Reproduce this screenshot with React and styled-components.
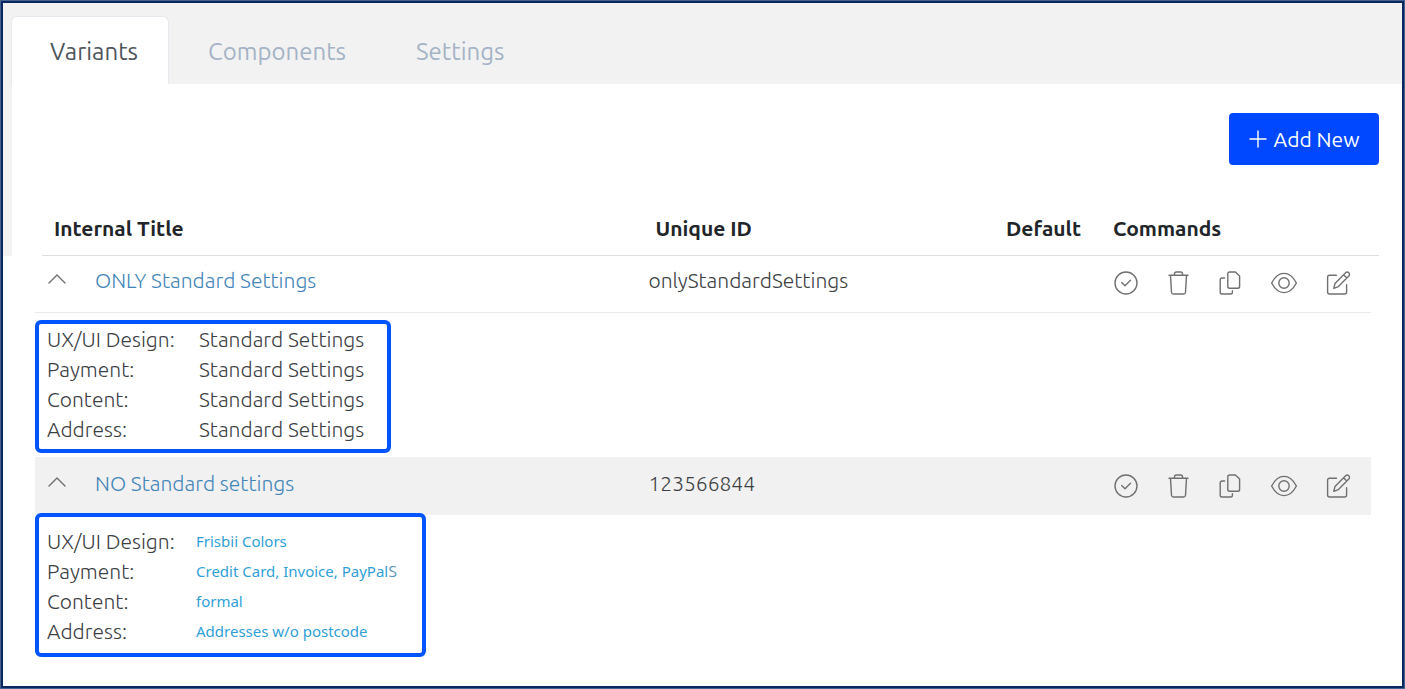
import React, { useState } from "react";
import styled, { createGlobalStyle } from "styled-components";

const GlobalStyle = createGlobalStyle`
  *, *::before, *::after {
    box-sizing: border-box;
  }

  body {
    margin: 0;
    background: #fff;
    color: #3c4043;
    font-family: Ubuntu, "Noto Sans", "Open Sans", sans-serif;
    font-size: 21px;
    font-weight: 300;
    line-height: 30px;
  }

  button {
    font: inherit;
    cursor: pointer;
  }
`

const Page = styled.main`
  min-height: 100vh;
  border: 3px solid #0a2860;
  outline: 1px solid #46608f;
  outline-offset: -1px;
  background: linear-gradient(#f2f2f2, #f2f2f2) 0 0 / 9px 253px no-repeat #fff;
`

const TabBar = styled.nav`
  display: flex;
  align-items: flex-end;
  padding: 13px 0 0 8px;
  background: #f2f2f2;
`

const Tab = styled.button`
  height: 68px;
  padding: 2px 30px 0 38px;
  border: 1px solid ${({ $active }) => ($active ? "#e6eaee" : "transparent")};
  border-bottom: 0;
  border-radius: 6px 6px 0 0;
  background: ${({ $active }) => ($active ? "#fff" : "transparent")};
  color: ${({ $active }) => ($active ? "#50555b" : "#a5b3c6")};
  font-size: 24px;
  font-weight: 400;
`

const Content = styled.section`
  padding: 29px 23px 29px 32px;
`

const Toolbar = styled.div`
  display: flex;
  justify-content: flex-end;
  margin-bottom: 35px;
`

const AddButton = styled.button`
  display: flex;
  align-items: center;
  justify-content: center;
  gap: 7px;
  width: 150px;
  height: 52px;
  padding: 0;
  border: 0;
  border-radius: 4px;
  background: #0048ff;
  color: #fff;
  font-weight: 400;
`

const Table = styled.table`
  display: block;
`

const Head = styled.thead`
  display: block;
  margin-left: 7px;
`

const Body = styled.tbody`
  display: block;
  margin-right: 8px;
`

const HeadRow = styled.tr`
  display: grid;
  grid-template-columns: minmax(0, 7fr) minmax(0, 4fr) 107px 266px;
  align-items: center;
  height: 56px;
  border-bottom: 1px solid #dedede;
`

const HeadCell = styled.th`
  padding: 0 0 0 ${({ $indent }) => ($indent ? "12px" : "0")};
  color: #212529;
  font-weight: 700;
  text-align: left;
`

const Row = styled.tr`
  display: grid;
  grid-template-columns: minmax(0, 7fr) minmax(0, 4fr) 114px 258px;
  height: ${({ $striped }) => ($striped ? "58px" : "57px")};
  padding-top: ${({ $striped }) => ($striped ? "11px" : "9px")};
  border-bottom: ${({ $striped }) => ($striped ? "0" : "1px solid #ebebeb")};
  background: ${({ $striped }) => ($striped ? "#f1f1f1" : "transparent")};
`

const Cell = styled.td`
  padding: 0;
`

const TitleCell = styled(Cell)`
  display: flex;
  gap: 26px;
  padding-left: 12px;
`

const Toggle = styled.button`
  display: flex;
  align-items: center;
  width: 22px;
  height: 28px;
  padding: 0;
  border: 0;
  background: none;
  color: #6f6f6f;
`

const TitleLink = styled.a`
  color: #4285b8;
  text-decoration: none;
`

const Commands = styled(Cell)`
  display: flex;
  gap: 27px;
  padding-top: 5px;
`

const IconButton = styled.button`
  width: 26px;
  height: 26px;
  padding: 0;
  border: 0;
  background: none;
  color: #707070;
`

const Icon = styled.svg`
  display: block;
  overflow: visible;
  fill: none;
  stroke: currentColor;
  stroke-width: 1.4;
  stroke-linecap: round;
  stroke-linejoin: round;
`

const DetailRow = styled.tr`
  display: block;
  margin: ${({ $compact }) => ($compact ? "-2px 0 0" : "7px 0 4px")};
`

const DetailCell = styled.td`
  display: block;
  padding: 0;
`

const DetailBox = styled.dl`
  display: grid;
  grid-template-columns: ${({ $compact }) => ($compact ? "149px" : "152px")} 1fr;
  width: ${({ $compact }) => ($compact ? "391px" : "356px")};
  margin: 0;
  padding: ${({ $compact }) => ($compact ? "9px 0 7px 8px" : "0 0 5px 8px")};
  border: 4px solid #0055ff;
  border-radius: 6px;
  background: #fff;

  dt, dd {
    margin: 0;
    white-space: nowrap;
  }

  dd {
    color: ${({ $compact }) => ($compact ? "#2f9fd8" : "inherit")};
    font-family: ${({ $compact }) => ($compact ? '"Noto Sans", sans-serif' : "inherit")};
    font-size: ${({ $compact }) => ($compact ? "15px" : "21px")};
    font-weight: ${({ $compact }) => ($compact ? "400" : "300")};
  }
`

const Suffix = styled.span`
  color: #5b93c0;
  font-family: Ubuntu, sans-serif;
  font-size: 21px;
  font-weight: 300;
  line-height: 20px;
`

const TABS = ["Variants", "Components", "Settings"]

const VARIANTS = [
  {
    title: "ONLY Standard Settings",
    id: "onlyStandardSettings",
    details: [
      ["UX/UI Design:", "Standard Settings"],
      ["Payment:", "Standard Settings"],
      ["Content:", "Standard Settings"],
      ["Address:", "Standard Settings"],
    ],
  },
  {
    title: "NO Standard settings",
    id: "123566844",
    custom: true,
    details: [
      ["UX/UI Design:", "Frisbii Colors"],
      ["Payment:", "Credit Card, Invoice, PayPal", "s"],
      ["Content:", "formal"],
      ["Address:", "Addresses w/o postcode"],
    ],
  },
]

const COMMANDS = [
  {
    label: "Set as default",
    shape: <><circle cx="13" cy="13" r="11" /><path d="M8.7 12.6 12 15.8l5.5-5.6" /></>,
  },
  {
    label: "Delete",
    shape: <path d="M3 5.2h19M8.5 5V3.8C8.5 2.8 9.3 2 10.3 2h4.4c1 0 1.8.8 1.8 1.8V5M4.5 5.4l1 16.8c.1 1 .8 1.8 1.8 1.8h10.4c1 0 1.7-.8 1.8-1.8l1-16.8" />,
  },
  {
    label: "Copy",
    shape: <path d="M10.6 2h5.8L20.6 6v10.4c0 1-.8 1.8-1.8 1.8h-8.2c-1 0-1.8-.8-1.8-1.8V3.8c0-1 .8-1.8 1.8-1.8ZM5.6 8H3c-1 0-1.8.8-1.8 1.8v12.4c0 1 .8 1.8 1.8 1.8h8.6c1 0 1.8-.8 1.8-1.8v-1.6" />,
  },
  {
    label: "Preview",
    shape: <><path d="M-.4 13C3 6.5 7 3.4 12 3.4S21 6.5 24.4 13C21 19.5 17 22.6 12 22.6S3 19.5-.4 13Z" /><circle cx="12" cy="13" r="5.2" /></>,
  },
  {
    label: "Edit",
    shape: <path d="M11.4 5.2H4.6c-1.1 0-2 .9-2 2V22c0 1.1.9 2 2 2h15c1.1 0 2-.9 2-2v-7.2M8.8 18.4l1.2-5L20.6 2.8c.9-.9 2.3-.9 3.2 0s.9 2.3 0 3.2L13.4 16.6ZM18.6 4.8l3.2 3.2" />,
  },
]

const CommandList = () => (
  <Commands>
    {COMMANDS.map(({ label, shape }) => (
      <IconButton key={label} type="button" aria-label={label}>
        <Icon width="26" height="26" viewBox="0 0 26 26">{shape}</Icon>
      </IconButton>
    ))}
  </Commands>
)

const Variant = ({ variant }) => {
  const [open, setOpen] = useState(true)

  return (
    <>
      <Row $striped={variant.custom}>
        <TitleCell>
          <Toggle
            type="button"
            aria-label={"Toggle " + variant.title}
            aria-expanded={open}
            onClick={() => setOpen(!open)}
          >
            <Icon width="20" height="12" viewBox="0 0 20 12">
              <path d={open ? "m2 10 8-8 8 8" : "m2 2 8 8 8-8"} />
            </Icon>
          </Toggle>
          <TitleLink href="#">{variant.title}</TitleLink>
        </TitleCell>
        <Cell>{variant.id}</Cell>
        <Cell />
        <CommandList />
      </Row>
      {open && (
        <DetailRow $compact={variant.custom}>
          <DetailCell colSpan={4}>
            <DetailBox $compact={variant.custom}>
              {variant.details.map(([name, value, suffix]) => (
                <React.Fragment key={name}>
                  <dt>{name}</dt>
                  <dd>{value}{suffix && <Suffix>{suffix}</Suffix>}</dd>
                </React.Fragment>
              ))}
            </DetailBox>
          </DetailCell>
        </DetailRow>
      )}
    </>
  )
}

const App = () => {
  const [tab, setTab] = useState("Variants")

  return (
    <>
      <GlobalStyle />
      <Page>
        <TabBar>
          {TABS.map((name) => (
            <Tab
              key={name}
              type="button"
              $active={tab === name}
              onClick={() => setTab(name)}
            >
              {name}
            </Tab>
          ))}
        </TabBar>
        <Content>
          <Toolbar>
            <AddButton type="button">
              <Icon width="18" height="18" viewBox="0 0 18 18">
                <path d="M9 1v16M1 9h16" />
              </Icon>
              Add New
            </AddButton>
          </Toolbar>
          <Table>
            <Head>
              <HeadRow>
                <HeadCell $indent>Internal Title</HeadCell>
                <HeadCell>Unique ID</HeadCell>
                <HeadCell>Default</HeadCell>
                <HeadCell>Commands</HeadCell>
              </HeadRow>
            </Head>
            <Body>
              {VARIANTS.map((variant) => (
                <Variant key={variant.id} variant={variant} />
              ))}
            </Body>
          </Table>
        </Content>
      </Page>
    </>
  )
}

export default App;
